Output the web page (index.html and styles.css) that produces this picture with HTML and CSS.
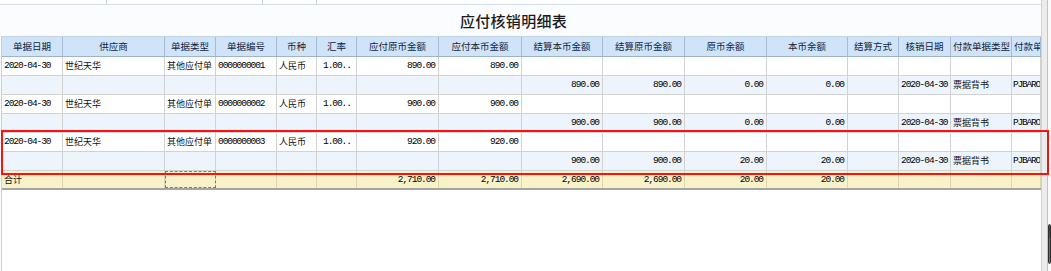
FILE: index.html
```html
<!DOCTYPE html>
<html lang="zh">
<head>
<meta charset="utf-8">
<title>应付核销明细表</title>
<link rel="stylesheet" href="styles.css">
</head>
<body>
<div class="page">
  <div class="main">
    <div class="topstrip"><span class="ts ts1"></span><span class="ts ts2"></span><span class="ts ts3"></span><span class="ts ts4"></span></div>
    <h1 class="title">应付核销明细表</h1>
    <div class="grid">
      <div class="row head">
        <div class="c">单据日期</div><div class="c">供应商</div><div class="c">单据类型</div><div class="c">单据编号</div><div class="c">币种</div><div class="c">汇率</div><div class="c">应付原币金额</div><div class="c">应付本币金额</div><div class="c">结算本币金额</div><div class="c">结算原币金额</div><div class="c">原币余额</div><div class="c">本币余额</div><div class="c">结算方式</div><div class="c">核销日期</div><div class="c">付款单据类型</div><div class="c">付款单据号</div>
      </div>
      <div class="row odd">
        <div class="c n">2020-04-30</div><div class="c">世纪天华</div><div class="c">其他应付单</div><div class="c n">0000000001</div><div class="c">人民币</div><div class="c n rate">1.00..</div><div class="c n r">890.00</div><div class="c n r">890.00</div><div class="c"></div><div class="c"></div><div class="c"></div><div class="c"></div><div class="c"></div><div class="c"></div><div class="c"></div><div class="c"></div>
      </div>
      <div class="row even">
        <div class="c"></div><div class="c"></div><div class="c"></div><div class="c"></div><div class="c"></div><div class="c"></div><div class="c"></div><div class="c"></div><div class="c n r">890.00</div><div class="c n r">890.00</div><div class="c n r">0.00</div><div class="c n r">0.00</div><div class="c"></div><div class="c n">2020-04-30</div><div class="c">票据背书</div><div class="c n pj">PJBARO</div>
      </div>
      <div class="row odd">
        <div class="c n">2020-04-30</div><div class="c">世纪天华</div><div class="c">其他应付单</div><div class="c n">0000000002</div><div class="c">人民币</div><div class="c n rate">1.00..</div><div class="c n r">900.00</div><div class="c n r">900.00</div><div class="c"></div><div class="c"></div><div class="c"></div><div class="c"></div><div class="c"></div><div class="c"></div><div class="c"></div><div class="c"></div>
      </div>
      <div class="row even">
        <div class="c"></div><div class="c"></div><div class="c"></div><div class="c"></div><div class="c"></div><div class="c"></div><div class="c"></div><div class="c"></div><div class="c n r">900.00</div><div class="c n r">900.00</div><div class="c n r">0.00</div><div class="c n r">0.00</div><div class="c"></div><div class="c n">2020-04-30</div><div class="c">票据背书</div><div class="c n pj">PJBARO</div>
      </div>
      <div class="row odd">
        <div class="c n">2020-04-30</div><div class="c">世纪天华</div><div class="c">其他应付单</div><div class="c n">0000000003</div><div class="c">人民币</div><div class="c n rate">1.00..</div><div class="c n r">920.00</div><div class="c n r">920.00</div><div class="c"></div><div class="c"></div><div class="c"></div><div class="c"></div><div class="c"></div><div class="c"></div><div class="c"></div><div class="c"></div>
      </div>
      <div class="row even">
        <div class="c"></div><div class="c"></div><div class="c"></div><div class="c"></div><div class="c"></div><div class="c"></div><div class="c"></div><div class="c"></div><div class="c n r">900.00</div><div class="c n r">900.00</div><div class="c n r">20.00</div><div class="c n r">20.00</div><div class="c"></div><div class="c n">2020-04-30</div><div class="c">票据背书</div><div class="c n pj">PJBARO</div>
      </div>
      <div class="row total">
        <div class="c">合计</div><div class="c"></div><div class="c focus"></div><div class="c"></div><div class="c"></div><div class="c"></div><div class="c n r">2,710.00</div><div class="c n r">2,710.00</div><div class="c n r">2,690.00</div><div class="c n r">2,690.00</div><div class="c n r">20.00</div><div class="c n r">20.00</div><div class="c"></div><div class="c"></div><div class="c"></div><div class="c"></div>
      </div>
    </div>
  </div>
  <div class="vbar">
    <div class="track"></div>
    <div class="edge"><div class="thumb"></div></div>
  </div>
  <div class="mark"></div>
</div>
</body>
</html>
```

FILE: styles.css
```css
html, body {
  margin: 0;
  padding: 0;
  background: #ffffff;
}

.page {
  position: relative;
  width: 1051px;
  height: 271px;
  display: flex;
  overflow: hidden;
  font-family: "Noto Sans CJK SC", sans-serif;
  color: #111;
}

.main {
  width: 1041px;
  display: flex;
  flex-direction: column;
  background: #fbfcfe;
}

.topstrip {
  height: 4px;
  display: flex;
  border-bottom: 1px solid #d3dde8;
  background: #ffffff;
}
.ts { height: 100%; box-sizing: border-box; }
.ts1 { width: 107px; border-right: 1px solid #c9cfd6; }
.ts2 { width: 156px; border-right: 1px solid #c9cfd6; }
.ts3 { width: 54px; border-right: 1px solid #c9cfd6; }
.ts4 { flex: 1; }

.title {
  margin: 0;
  height: 31px;
  display: flex;
  align-items: center;
  justify-content: center;
  padding-right: 14px;
  font-size: 15px;
  font-weight: 500;
  color: #1a1a1a;
  letter-spacing: 0.3px;
}

.grid {
  flex: 1;
  margin-left: 1px;
  border-left: 1px solid #cfcfcf;
  background: #ffffff;
  overflow: hidden;
}

.row {
  display: grid;
  grid-template-columns: 61px 102px 51px 61px 40px 40px 82px 83px 81px 82px 82px 81px 51px 52px 61px 29px;
  height: 19px;
  box-sizing: border-box;
  border-bottom: 1px solid #d2d2d2;
}

.c {
  box-sizing: border-box;
  border-right: 1px solid #d2d2d2;
  padding: 0 2px;
  font-size: 9px;
  line-height: 18px;
  white-space: nowrap;
  overflow: hidden;
}
.n {
  font-family: "Liberation Mono", "DejaVu Sans Mono", monospace;
  font-size: 9.5px;
  letter-spacing: -1.05px;
  color: #000;
}
.r { text-align: right; padding-right: 3px; }
.rate { padding-left: 6px; }
.pj { padding: 0 0 0 1px; letter-spacing: -1.2px; }

.head {
  height: 21px;
  background: #cfe4f9;
  border-top: 1px solid #c4d4e4;
  border-bottom: 1px solid #9fb3c8;
}
.head .c {
  text-align: center;
  font-size: 9.5px;
  line-height: 19px;
  color: #14233d;
  border-right-color: #a6bbd0;
}

.odd { background: #ffffff; }
.even { background: #eef4fc; }

.total {
  background: #f8f2c9;
  border-bottom: 2px solid #a4a4a4;
}
.total .c { border-right-color: #dcd6ae; line-height: 17px; }
.total .focus { border: 1px dashed #7a7a7a; }

.vbar {
  width: 10px;
  display: flex;
  background: #ffffff;
}
.track {
  width: 5px;
  background: #ececec;
  border-left: 1px solid #d2d2d2;
}
.edge {
  flex: 1;
  position: relative;
  border-left: 1px solid #c2c2c2;
  background: #fafafa;
}
.thumb {
  position: absolute;
  top: 224px;
  left: 0;
  right: 0;
  height: 40px;
  box-sizing: border-box;
  border: 1px solid #2e2e2e;
  border-radius: 2px;
  background: linear-gradient(#4a4a4a 0 35%, #3d8a4c 35% 100%);
}

.mark {
  position: absolute;
  left: 1px;
  top: 130px;
  width: 1048px;
  height: 45px;
  box-sizing: border-box;
  border: 2px solid #ff1010;
  pointer-events: none;
}
```
